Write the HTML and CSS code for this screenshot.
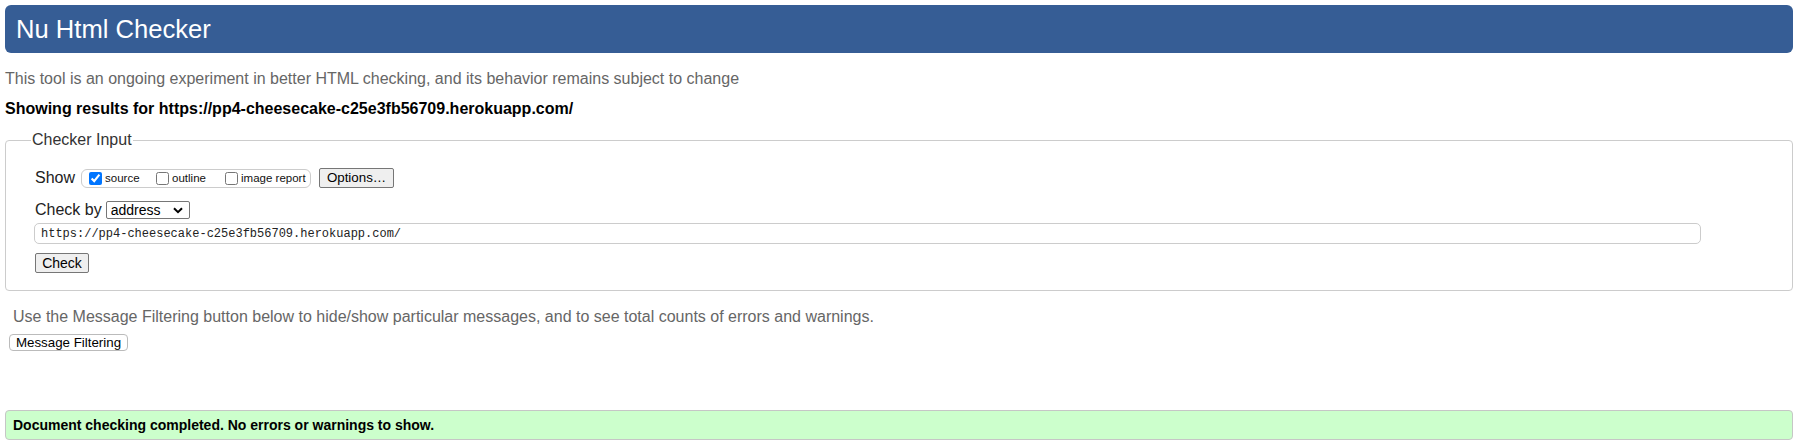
FILE: index.html
```html
<!DOCTYPE html>
<html lang="en">
<head>
<meta charset="utf-8">
<title>Nu Html Checker</title>
<link rel="stylesheet" href="styles.css">
</head>
<body>
<h1 class="masthead">Nu Html Checker</h1>
<p class="intro">This tool is an ongoing experiment in better HTML checking, and its behavior remains subject to change</p>
<p class="results-for">Showing results for https://pp4-cheesecake-c25e3fb56709.herokuapp.com/</p>
<form class="checker-form">
  <fieldset class="checker">
    <legend class="checker-legend">Checker Input</legend>
    <div class="show-row">
      <span class="row-label">Show</span>
      <span class="show-group">
        <label class="opt opt-source"><input type="checkbox" checked>source</label>
        <label class="opt opt-outline"><input type="checkbox">outline</label>
        <label class="opt opt-image"><input type="checkbox">image report</label>
      </span>
      <button type="button" class="btn btn-options">Options…</button>
    </div>
    <div class="checkby-row">
      <span class="row-label">Check by</span>
      <span class="select-wrap">
        <select class="select"><option>address</option></select>
        <svg class="chevron" width="10" height="7" viewBox="0 0 10 7" aria-hidden="true"><path d="M1 1.2 L5 5.2 L9 1.2" fill="none" stroke="#000" stroke-width="2"/></svg>
      </span>
    </div>
    <input class="url" type="text" value="https://pp4-cheesecake-c25e3fb56709.herokuapp.com/">
    <div class="submit-row"><button type="button" class="btn btn-check">Check</button></div>
  </fieldset>
</form>
<p class="filter-note">Use the Message Filtering button below to hide/show particular messages, and to see total counts of errors and warnings.</p>
<div class="filter-row"><button type="button" class="btn-filter">Message Filtering</button></div>
<div class="success">Document checking completed. No errors or warnings to show.</div>
</body>
</html>
```
FILE: styles.css
```css
html, body {
  margin: 0;
  padding: 0;
  background: #fff;
  color: #000;
  font-family: "Liberation Sans", Arial, sans-serif;
  font-size: 16px;
}

.masthead {
  margin: 5px 6px 0 5px;
  height: 48px;
  display: flex;
  align-items: center;
  padding: 0 11px;
  background: #365d95;
  color: #fff;
  border-radius: 6px;
  font-size: 25.6px;
  font-weight: normal;
  line-height: 30px;
}

.intro {
  margin: 17px 0 0 5px;
  line-height: 18px;
  color: #666;
}

.results-for {
  margin: 12px 0 0 5px;
  line-height: 18px;
  font-weight: bold;
}

.checker-form {
  margin: 13px 6px 0 5px;
}

.checker {
  margin: 0;
  padding: 19px 90px 17px 29px;
  border: 1px solid #ccc;
  border-radius: 4px;
  min-width: 0;
}

.checker-legend {
  margin-left: -4px;
  padding: 0 1px;
  line-height: 18px;
  color: #333;
}

.row-label {
  color: #222;
  line-height: 18px;
}

.show-row {
  display: flex;
  align-items: center;
  height: 20px;
}

.show-group {
  display: inline-flex;
  align-items: center;
  margin-left: 6px;
  height: 17px;
  padding: 0 0 0 6px;
  width: 222px;
  border: 1px solid #ccc;
  border-radius: 6px;
  font-size: 11.5px;
  color: #111;
}

.opt {
  display: inline-flex;
  align-items: center;
  white-space: nowrap;
}

.opt input {
  margin: 0 3px 0 1px;
  width: 13px;
  height: 13px;
}

.opt-source { width: 67px; }
.opt-outline { width: 69px; }

.btn {
  font-family: "Liberation Sans", Arial, sans-serif;
  font-size: 13.33px;
  color: #000;
  background: #efefef;
  border: 1px solid #767676;
  border-radius: 2px;
  height: 20px;
  padding: 0 6px;
  line-height: 16px;
}

.btn-options {
  margin-left: 8px;
  width: 75px;
}

.checkby-row {
  display: flex;
  align-items: center;
  margin-top: 13px;
  height: 18px;
}

.select-wrap {
  display: inline-flex;
  align-items: center;
  margin-left: 4px;
}

.select {
  appearance: none;
  -webkit-appearance: none;
  width: 84px;
  height: 18px;
  padding: 0 0 0 4px;
  border: 1px solid #767676;
  border-radius: 2px;
  background: #fff;
  color: #000;
  font-family: "Liberation Sans", Arial, sans-serif;
  font-size: 14px;
  line-height: 16px;
}

.chevron {
  margin-left: -17px;
  pointer-events: none;
}

.url {
  display: block;
  box-sizing: border-box;
  width: 100%;
  height: 21px;
  margin: 4px 0 0 -1px;
  padding: 0 6px;
  border: 1px solid #ccc;
  border-radius: 5px;
  font-family: "Liberation Mono", "Courier New", monospace;
  font-size: 12px;
  color: #222;
  background: #fff;
}

.submit-row {
  margin-top: 9px;
  margin-left: 0;
  display: flex;
}

.btn-check {
  width: 54px;
  font-size: 14px;
}

.filter-note {
  margin: 17px 0 0 13px;
  line-height: 18px;
  color: #666;
}

.filter-row {
  margin: 8px 0 0 9px;
  display: flex;
}

.btn-filter {
  height: 17px;
  width: 119px;
  padding: 0;
  font-family: "Liberation Sans", Arial, sans-serif;
  font-size: 13.33px;
  line-height: 15px;
  color: #000;
  background: #fff;
  border: 1px solid #bbb;
  border-radius: 4px;
}

.success {
  margin: 59px 6px 0 5px;
  height: 28px;
  display: flex;
  align-items: center;
  padding: 0 0 0 7px;
  background: #ccffcc;
  border: 1px solid #c6c6c6;
  border-radius: 4px;
  font-size: 14px;
  font-weight: bold;
}
```
